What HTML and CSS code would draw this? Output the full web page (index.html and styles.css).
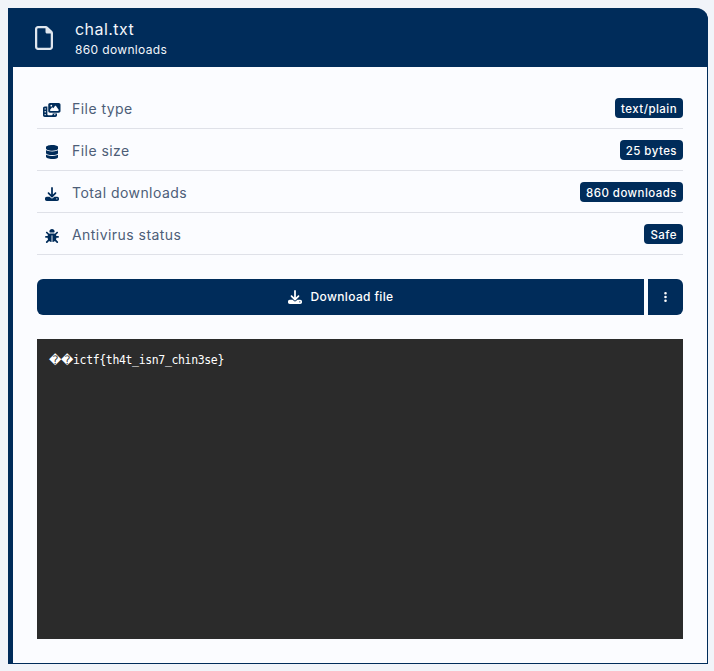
FILE: index.html
```html
<!DOCTYPE html>
<html lang="en">
<head>
<meta charset="utf-8">
<title>chal.txt</title>
<link rel="stylesheet" href="styles.css">
</head>
<body>
<main class="card">
  <header class="card-head">
    <svg class="head-icon" viewBox="0 0 384 512"><path d="M320 464c8.800 0 16-7.200 16-16V160H256c-17.700 0-32-14.300-32-32V48H64c-8.800 0-16 7.200-16 16V448c0 8.800 7.200 16 16 16H320zM0 64C0 28.700 28.700 0 64 0H229.500c17 0 33.300 6.700 45.300 18.700l90.500 90.500c12 12 18.700 28.300 18.700 45.300V448c0 35.300-28.700 64-64 64H64c-35.300 0-64-28.700-64-64V64z"/></svg>
    <div class="head-text">
      <div class="head-title">chal.txt</div>
      <div class="head-sub">860 downloads</div>
    </div>
  </header>
  <div class="card-body">
    <ul class="rows">
      <li class="row">
        <span class="row-icon"><svg class="icon" viewBox="0 0 640 512"><path d="M256 0H576c35.300 0 64 28.700 64 64V288c0 35.300-28.700 64-64 64H256c-35.300 0-64-28.700-64-64V64c0-35.300 28.700-64 64-64zM476 106.700C471.500 100 464 96 456 96s-15.600 4-20 10.700l-56 84L362.700 169c-4.600-5.700-11.500-9-18.700-9s-14.200 3.300-18.700 9l-64 80c-5.800 7.200-6.900 17.100-2.900 25.400s12.400 13.600 21.600 13.600h80 48H552c8.900 0 17-4.900 21.200-12.700s3.700-17.300-1.200-24.600l-96-144zM336 96a32 32 0 1 0 -64 0 32 32 0 1 0 64 0zM64 128h96V384v32c0 17.700 14.300 32 32 32H320c17.700 0 32-14.300 32-32V384H512v64c0 35.300-28.700 64-64 64H64c-35.300 0-64-28.700-64-64V192c0-35.300 28.700-64 64-64zm8 64c-8.800 0-16 7.200-16 16v16c0 8.800 7.200 16 16 16H88c8.800 0 16-7.200 16-16V208c0-8.800-7.200-16-16-16H72zm0 104c-8.800 0-16 7.200-16 16v16c0 8.800 7.200 16 16 16H88c8.800 0 16-7.200 16-16V312c0-8.800-7.200-16-16-16H72zm0 104c-8.800 0-16 7.200-16 16v16c0 8.800 7.200 16 16 16H88c8.800 0 16-7.200 16-16V416c0-8.800-7.200-16-16-16H72zm336 16v16c0 8.800 7.200 16 16 16h16c8.800 0 16-7.200 16-16V416c0-8.800-7.200-16-16-16H424c-8.800 0-16 7.200-16 16z"/></svg></span>
        <span class="row-label">File type</span>
        <span class="badge">text/plain</span>
      </li>
      <li class="row">
        <span class="row-icon"><svg class="icon" viewBox="0 0 448 512"><path d="M448 80v48c0 44.200-100.300 80-224 80S0 172.200 0 128V80C0 35.800 100.300 0 224 0S448 35.800 448 80zM393.200 214.700c20.800-7.400 39.900-16.900 54.800-28.600V288c0 44.200-100.300 80-224 80S0 332.200 0 288V186.100c14.900 11.800 34 21.200 54.800 28.600C99.700 230.700 159.500 240 224 240s124.300-9.300 169.200-25.300zM0 346.100c14.900 11.800 34 21.200 54.800 28.600C99.700 390.700 159.500 400 224 400s124.300-9.300 169.200-25.300c20.800-7.400 39.900-16.900 54.800-28.600V432c0 44.200-100.300 80-224 80S0 476.200 0 432V346.100z"/></svg></span>
        <span class="row-label">File size</span>
        <span class="badge">25 bytes</span>
      </li>
      <li class="row">
        <span class="row-icon"><svg class="icon" viewBox="0 0 512 512"><path d="M288 32c0-17.700-14.300-32-32-32s-32 14.300-32 32V274.700l-73.400-73.400c-12.500-12.500-32.800-12.500-45.300 0s-12.500 32.800 0 45.300l128 128c12.500 12.500 32.800 12.500 45.300 0l128-128c12.500-12.500 12.500-32.800 0-45.300s-32.800-12.500-45.300 0L288 274.700V32zM64 352c-35.300 0-64 28.700-64 64v32c0 35.300 28.700 64 64 64H448c35.300 0 64-28.700 64-64V416c0-35.300-28.700-64-64-64H346.500l-45.300 45.300c-25 25-65.500 25-90.500 0L165.500 352H64zm368 56a24 24 0 1 1 0 48 24 24 0 1 1 0-48z"/></svg></span>
        <span class="row-label">Total downloads</span>
        <span class="badge">860 downloads</span>
      </li>
      <li class="row">
        <span class="row-icon"><svg class="icon" viewBox="0 0 512 512"><path d="M256 0c53 0 96 43 96 96v3.600c0 15.700-12.700 28.400-28.400 28.400H188.400c-15.700 0-28.400-12.700-28.400-28.400V96c0-53 43-96 96-96zM41.400 105.400c12.500-12.500 32.800-12.500 45.300 0l64 64c.7 .7 1.300 1.400 1.900 2.100c14.200-7.300 30.400-11.500 45.400-11.500H310c17 0 33.200 4.200 47.400 11.500c.6-.7 1.200-1.400 1.900-2.100l64-64c12.500-12.500 32.800-12.500 45.300 0s12.500 32.800 0 45.300l-64 64c-.7 .7-1.400 1.300-2.100 1.900c6.200 12 10.100 25.300 11.100 39.500H480c17.700 0 32 14.300 32 32s-14.300 32-32 32H416c0 24.600-5.500 47.800-15.400 68.600c2.200 1.300 4.200 2.900 6 4.800l64 64c12.500 12.500 12.500 32.800 0 45.300s-32.800 12.500-45.300 0l-63.100-63.100c-24.500 21.800-55.800 36.200-90.300 39.600V240c0-8.800-7.200-16-16-16s-16 7.200-16 16V479.200c-34.500-3.400-65.800-17.800-90.300-39.600L86.600 502.600c-12.500 12.500-32.800 12.500-45.300 0s-12.500-32.800 0-45.300l64-64c1.900-1.900 3.900-3.400 6-4.800C101.500 367.800 96 344.600 96 320H32c-17.700 0-32-14.300-32-32s14.300-32 32-32H96.300c1.100-14.100 5-27.500 11.100-39.500c-.7-.6-1.400-1.200-2.100-1.900l-64-64c-12.500-12.500-12.500-32.800 0-45.300z"/></svg></span>
        <span class="row-label">Antivirus status</span>
        <span class="badge">Safe</span>
      </li>
    </ul>
    <div class="actions">
      <button class="btn btn-main" type="button">
        <svg class="icon icon-btn" viewBox="0 0 512 512"><path d="M288 32c0-17.700-14.300-32-32-32s-32 14.300-32 32V274.700l-73.400-73.400c-12.500-12.500-32.800-12.500-45.300 0s-12.500 32.800 0 45.300l128 128c12.500 12.500 32.800 12.500 45.300 0l128-128c12.500-12.500 12.500-32.800 0-45.300s-32.800-12.500-45.300 0L288 274.700V32zM64 352c-35.300 0-64 28.700-64 64v32c0 35.300 28.700 64 64 64H448c35.300 0 64-28.700 64-64V416c0-35.300-28.700-64-64-64H346.500l-45.300 45.300c-25 25-65.500 25-90.500 0L165.500 352H64zm368 56a24 24 0 1 1 0 48 24 24 0 1 1 0-48z"/></svg>
        <span>Download file</span>
      </button>
      <button class="btn btn-more" type="button" aria-label="More">
        <svg class="icon icon-dots" viewBox="0 0 128 512"><path d="M64 360a56 56 0 1 0 0 112 56 56 0 1 0 0-112zm0-160a56 56 0 1 0 0 112 56 56 0 1 0 0-112zM120 96A56 56 0 1 0 8 96a56 56 0 1 0 112 0z"/></svg>
      </button>
    </div>
    <pre class="code"><span class="bad">�</span><span class="bad">�</span>ictf{th4t_isn7_chin3se}</pre>
  </div>
</main>
</body>
</html>
```
FILE: styles.css
```css
* { box-sizing: border-box; }
html, body { height: 100%; overflow: hidden; }
body {
  margin: 0;
  padding: 8px 6px 0 8px;
  background: #f1f4f9;
  font-family: Inter, "Open Sans", sans-serif;
  color: #002c5a;
}
.card {
  width: 700px;
  height: 656px;
  background: #fbfcff;
  border: solid #002c5a;
  border-width: 0 1px 1px 5px;
  border-top-right-radius: 12px;
  display: flex;
  flex-direction: column;
}
.card-head {
  height: 59px;
  margin-right: -1px;
  background: #002c5a;
  border-top-right-radius: 12px;
  display: flex;
  align-items: center;
  padding-left: 22px;
  gap: 22px;
  color: #f2f6fb;
}
.head-icon { width: 18px; height: 24px; fill: #dfe6ee; flex: none; }
.head-text { padding-top: 2px; }
.head-title { font-size: 16px; line-height: 20px; letter-spacing: 0.45px; }
.head-sub { font-size: 12px; line-height: 16px; margin-top: 3px; letter-spacing: 0.35px; }
.card-body { flex: 1; padding: 20px 24px 24px; display: flex; flex-direction: column; }
.rows { list-style: none; margin: 0; padding: 0; }
.row {
  height: 42px;
  border-bottom: 1px solid #dfe1e8;
  display: flex;
  align-items: center;
  font-size: 14px;
}
.row-icon { width: 30px; margin-right: 5px; padding-top: 4px; display: flex; justify-content: center; }
.icon { height: 14px; fill: #002c5a; display: block; }
.row-label { flex: 1; padding-top: 2px; color: #4d5e78; letter-spacing: 0.45px; }
.badge {
  height: 20px;
  padding: 1px 6px 0;
  border-radius: 4px;
  background: #002c5a;
  color: #fff;
  font-size: 11.5px;
  font-weight: 500;
  line-height: 20px;
  letter-spacing: 0.45px;
}
.actions { display: flex; gap: 4px; margin-top: 24px; }
.btn {
  height: 36px;
  border: 0;
  background: #002c5a;
  color: #fff;
  font: inherit;
  display: flex;
  align-items: center;
  justify-content: center;
}
.btn-main {
  flex: 1;
  gap: 9px;
  padding-bottom: 2px;
  font-size: 12px;
  font-weight: 500;
  letter-spacing: 0.35px;
  border-radius: 6px 0 0 6px;
}
.btn-more { width: 35px; border-radius: 0 6px 6px 0; }
.icon-btn { height: 14px; fill: #fff; }
.icon-dots { height: 12px; fill: #fff; }
.code {
  flex: 1;
  margin: 24px 0 0;
  padding: 13px 12px 12px;
  background: #2b2b2b;
  color: #fff;
  font-family: "DejaVu Sans Mono", monospace;
  font-size: 11.5px;
  letter-spacing: -0.36px;
  line-height: 17px;
}
.bad {
  display: inline-block;
  width: 12px;
  font-family: "DejaVu Sans", sans-serif;
  font-size: 12px;
  letter-spacing: 0;
  line-height: 17px;
}
```
